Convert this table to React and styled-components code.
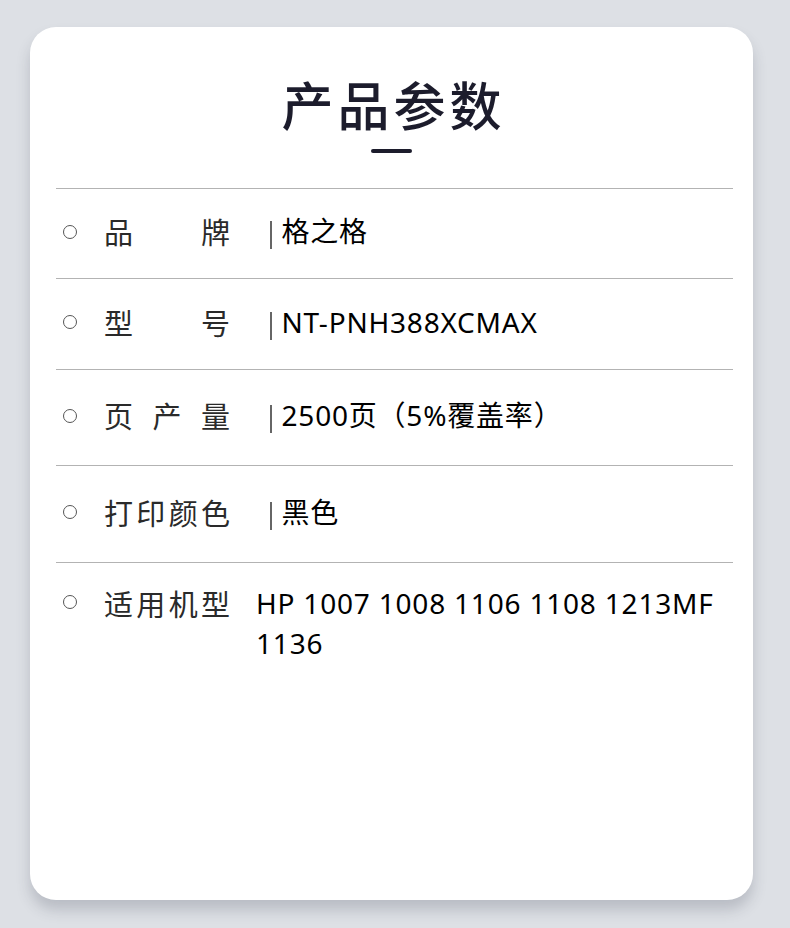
import React from 'react'
import styled, { createGlobalStyle } from 'styled-components'

const GlobalStyle = createGlobalStyle`
  html, body {
    margin: 0;
    padding: 0;
    background: #dde0e5;
  }
  body {
    font-family: "Noto Sans", "Noto Sans CJK SC", sans-serif;
  }
`

const Page = styled.div`
  width: 790px;
  height: 928px;
  box-sizing: border-box;
  padding: 27px 37px 0 30px;
  background: #dde0e5;
`

const Card = styled.div`
  height: 873px;
  background: #fff;
  border-radius: 26px;
  box-shadow: 0 10px 14px rgba(60, 66, 80, 0.22);
  display: flex;
  flex-direction: column;
  align-items: center;
  padding-top: 46px;
  box-sizing: border-box;
`

const Title = styled.h1`
  margin: 0;
  font-family: "Noto Sans CJK SC", sans-serif;
  font-size: 52px;
  font-weight: 500;
  line-height: 62px;
  letter-spacing: 4px;
  padding-left: 4px;
  color: #1c1c2c;
`

const Dash = styled.div`
  width: 41px;
  height: 4px;
  border-radius: 2px;
  background: #1c1c2c;
  margin-top: 14px;
`

const List = styled.div`
  align-self: stretch;
  margin: 35px 20px 0 26px;
`

const Row = styled.div`
  display: flex;
  align-items: ${p => (p.$top ? 'flex-start' : 'center')};
  height: ${p => p.$h}px;
  border-top: 1px solid #b3b3b3;
  padding: ${p => (p.$top ? '20px 0 0' : '0 0 5px')};
  box-sizing: border-box;
`

const Dot = styled.span`
  flex: none;
  width: 12px;
  height: 12px;
  border: 1.7px solid #555;
  border-radius: 50%;
  margin-left: 7px;
  margin-top: ${p => (p.$top ? 12 : 1)}px;
`

const Label = styled.span`
  flex: none;
  width: 126px;
  margin-left: 27px;
  font-family: "Noto Sans CJK SC", sans-serif;
  font-size: 29px;
  line-height: 40px;
  color: #2a2a2a;
  text-align: justify;
  text-align-last: justify;
`

const Sep = styled.span`
  flex: none;
  width: 1.5px;
  height: 28px;
  background: #666;
  margin: 8px 10px 0 40px;
`

const Value = styled.span`
  font-family: "Noto Sans", "Noto Sans CJK SC", sans-serif;
  font-size: 28px;
  letter-spacing: 0.8px;
  line-height: 40px;
  color: #000;
  margin-left: ${p => (p.$plain ? 26 : 0)}px;
  max-width: 460px;
`

const rows = [
  { label: '品牌', value: '格之格', h: 90 },
  { label: '型号', value: 'NT-PNH388XCMAX', h: 91 },
  { label: '页产量', value: '2500页（5%覆盖率）', h: 96 },
  { label: '打印颜色', value: '黑色', h: 97 },
]

const App = () => {
  return (
    <Page>
      <GlobalStyle />
      <Card>
        <Title>产品参数</Title>
        <Dash />
        <List>
          {rows.map(r => (
            <Row key={r.label} $h={r.h}>
              <Dot />
              <Label>{r.label}</Label>
              <Sep />
              <Value>{r.value}</Value>
            </Row>
          ))}
          <Row $top $h={120}>
            <Dot $top />
            <Label>适用机型</Label>
            <Value $plain>HP 1007 1008 1106 1108 1213MF 1136</Value>
          </Row>
        </List>
      </Card>
    </Page>
  )
}

export default App
